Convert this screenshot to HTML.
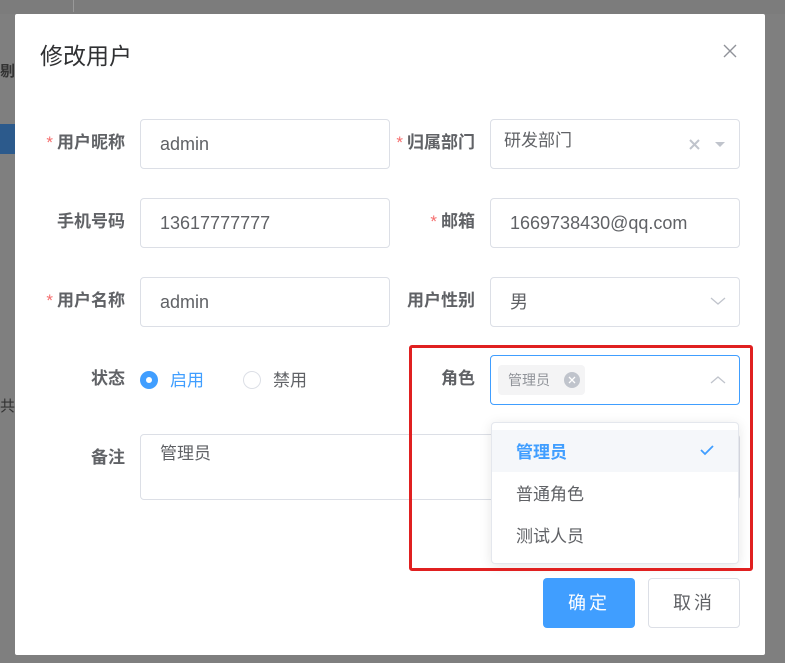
<!DOCTYPE html>
<html><head><meta charset="utf-8"><style>
*{box-sizing:border-box;margin:0;padding:0}
body{width:785px;height:663px;background:#7f7f7f;position:relative;overflow:hidden;font-family:"Liberation Sans","Noto Sans CJK SC",sans-serif;color:#606266}
.a{position:absolute}
.dlg{left:15px;top:14px;width:750px;height:641px;background:#fff;border-radius:2px}
.lbl{font-size:17px;font-weight:bold;color:#606266;text-align:right;width:120px;line-height:20px}
.star{color:#f56c6c;font-weight:normal;margin-right:4px}
.inp{border:1px solid #dcdfe6;border-radius:4px;height:50px;font-size:18px;color:#606266;padding-left:19px;line-height:48px}
</style></head><body>
<div class="a" style="left:0;top:0;width:785px;height:14px;background:#7c7c7c"></div>
<div class="a" style="left:73px;top:0;width:1px;height:12px;background:#999"></div>
<div class="a" style="left:0;top:124px;width:15px;height:30px;background:#2c5a8c"></div>
<div class="a" style="left:0;top:395px;font-size:15px;color:#333">共</div>
<div class="a" style="left:0;top:60px;font-size:15px;color:#333;font-weight:bold">剔</div>

<div class="a dlg"></div>
<div class="a" style="left:40px;top:37px;font-size:23px;color:#303133">修改用户</div>
<svg class="a" style="left:722px;top:43px" width="16" height="16"><path d="M2 2L14 14M14 2L2 14" stroke="#909399" stroke-width="1.4"/></svg>

<div class="a lbl" style="left:5px;top:133px"><span class="star">*</span>用户昵称</div>
<div class="a inp" style="left:140px;top:119px;width:250px">admin</div>
<div class="a lbl" style="left:355px;top:133px"><span class="star">*</span>归属部门</div>
<div class="a inp" style="left:490px;top:119px;width:250px;padding-left:13px;line-height:42px;font-size:17px">研发部门</div>
<svg class="a" style="left:689px;top:139px" width="40" height="12"><path d="M1 1L10 10M10 1L1 10" stroke="#c0c4cc" stroke-width="2"/><path d="M26 3L36 3L31 8Z" fill="#c0c4cc"/></svg>

<div class="a lbl" style="left:5px;top:212px">手机号码</div>
<div class="a inp" style="left:140px;top:198px;width:250px">13617777777</div>
<div class="a lbl" style="left:355px;top:212px"><span class="star">*</span>邮箱</div>
<div class="a inp" style="left:490px;top:198px;width:250px">1669738430@qq.com</div>

<div class="a lbl" style="left:5px;top:291px"><span class="star">*</span>用户名称</div>
<div class="a inp" style="left:140px;top:277px;width:250px">admin</div>
<div class="a lbl" style="left:355px;top:291px">用户性别</div>
<div class="a inp" style="left:490px;top:277px;width:250px">男</div>
<svg class="a" style="left:710px;top:296px" width="16" height="10"><path d="M1 2L8 8L15 2" stroke="#c0c4cc" stroke-width="1.3" fill="none"/></svg>

<div class="a lbl" style="left:5px;top:369px">状态</div>
<div class="a" style="left:140px;top:371px;width:18px;height:18px;border-radius:50%;background:#409eff"><div style="margin:6px;width:6px;height:6px;border-radius:50%;background:#fff"></div></div>
<div class="a" style="left:170px;top:366px;font-size:17px;color:#409eff">启用</div>
<div class="a" style="left:243px;top:371px;width:18px;height:18px;border-radius:50%;border:1px solid #dcdfe6"></div>
<div class="a" style="left:273px;top:366px;font-size:17px;color:#606266">禁用</div>

<div class="a lbl" style="left:355px;top:369px">角色</div>
<div class="a inp" style="left:490px;top:355px;width:250px;border-color:#409eff"></div>
<div class="a" style="left:498px;top:365px;width:87px;height:30px;background:#f4f4f5;border-radius:4px;font-size:14px;color:#909399;line-height:30px;padding-left:10px">管理员</div>
<div class="a" style="left:564px;top:372px;width:16px;height:16px;border-radius:50%;background:#c0c4cc"><svg width="16" height="16"><path d="M5 5L11 11M11 5L5 11" stroke="#fff" stroke-width="1.3"/></svg></div>
<svg class="a" style="left:710px;top:375px" width="16" height="10"><path d="M1 8L8 2L15 8" stroke="#c0c4cc" stroke-width="1.3" fill="none"/></svg>

<div class="a lbl" style="left:5px;top:448px">备注</div>
<div class="a inp" style="left:140px;top:434px;width:600px;height:66px;line-height:38px;font-size:17px">管理员</div>

<div class="a" style="left:491px;top:422px;width:248px;height:142px;background:#fff;border:1px solid #e4e7ed;border-radius:4px;box-shadow:0 2px 12px rgba(0,0,0,.1)"></div>
<div class="a" style="left:492px;top:430px;width:246px;height:42px;background:#f5f7fa"></div>
<div class="a" style="left:516px;top:438px;font-size:17px;font-weight:bold;color:#409eff">管理员</div>
<svg class="a" style="left:700px;top:444px" width="14" height="12"><path d="M1 6L5 10L13 2" stroke="#409eff" stroke-width="1.8" fill="none"/></svg>
<div class="a" style="left:516px;top:480px;font-size:17px;color:#606266">普通角色</div>
<div class="a" style="left:516px;top:522px;font-size:17px;color:#606266">测试人员</div>

<div class="a" style="left:409px;top:345px;width:344px;height:226px;border:3px solid #e02020;border-radius:3px"></div>

<div class="a" style="left:543px;top:578px;width:92px;height:50px;background:#409eff;border-radius:4px;color:#fff;font-size:18px;text-align:center;line-height:50px;letter-spacing:3px">确定</div>
<div class="a" style="left:648px;top:578px;width:92px;height:50px;border:1px solid #dcdfe6;border-radius:4px;color:#606266;font-size:18px;text-align:center;line-height:48px;letter-spacing:3px">取消</div>
</body></html>
